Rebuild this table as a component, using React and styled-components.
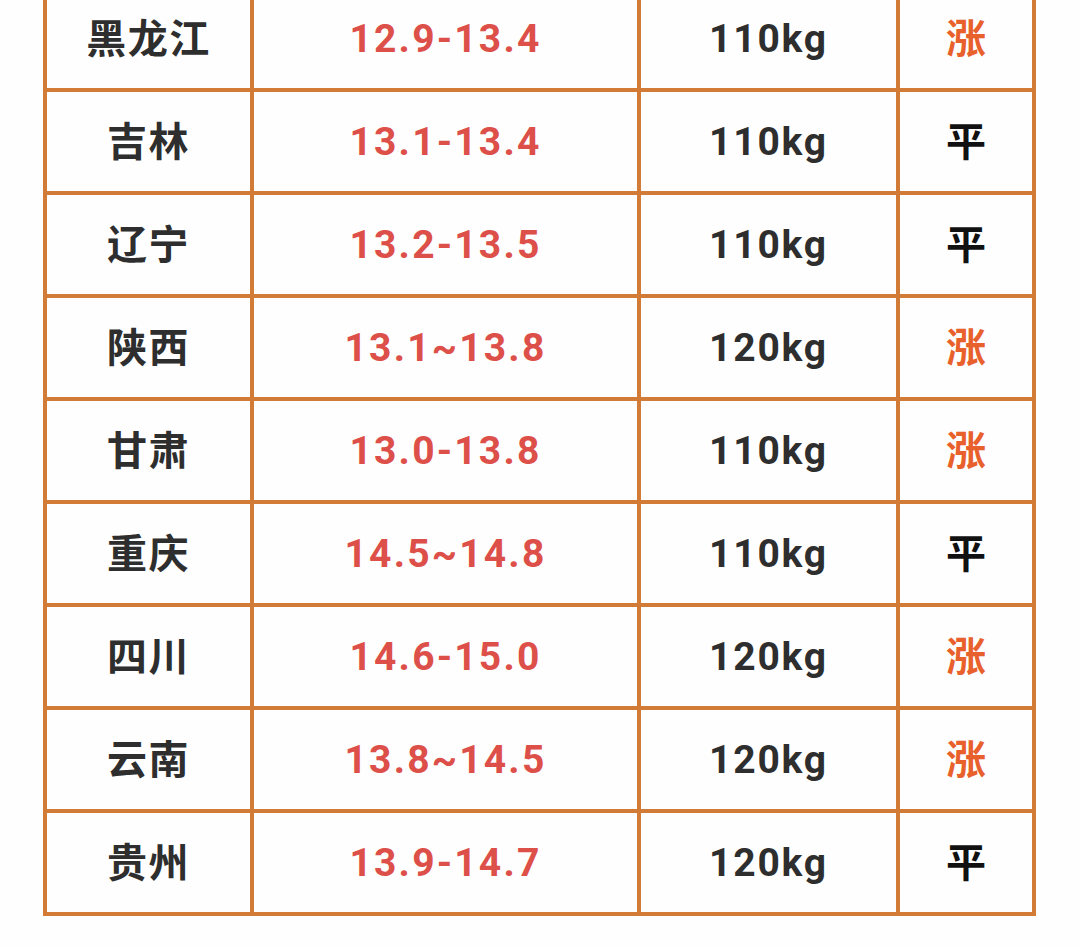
import React from "react";
import styled, { createGlobalStyle } from "styled-components";

const Global = createGlobalStyle`
  html, body { margin: 0; padding: 0; background: #fefefe; }
  body { font-family: "Noto Sans CJK SC", "Noto Sans", sans-serif; }
`;

const Page = styled.div`
  width: 1080px;
  height: 946px;
  overflow: hidden;
  background: #fefefe;
`;

const Table = styled.div`
  display: grid;
  grid-template-columns: 203px 383px 255px 132px;
  grid-auto-rows: 99px;
  gap: 4px;
  padding: 4px;
  background: #d27b36;
  width: max-content;
  margin-left: 43px;
  margin-top: -15px;
`;

const Cell = styled.div`
  background: #fefefe;
  display: flex;
  align-items: center;
  justify-content: center;
  font-weight: 700;
  white-space: nowrap;
`;

const Region = styled(Cell)`
  font-family: "Noto Sans CJK SC", sans-serif;
  font-size: 40px;
  color: #2e2e2e;
  letter-spacing: 1.5px;
  padding-bottom: 5px;
`;

const Price = styled(Cell)`
  font-family: Roboto, "Liberation Sans", sans-serif;
  font-size: 39px;
  color: #dd4f49;
  letter-spacing: 2.2px;
  padding-top: 1px;
`;

const Weight = styled(Cell)`
  font-family: Roboto, "Liberation Sans", sans-serif;
  font-size: 39px;
  color: #2e2e2e;
  letter-spacing: 1.8px;
  padding-top: 1px;
`;

const Trend = styled(Cell)`
  font-family: "Noto Sans CJK SC", sans-serif;
  font-size: 40px;
  padding-bottom: 5px;
  color: ${(p) => (p.$up ? "#e8612c" : "#111111")};
`;

const rows = [
  ["黑龙江", "12.9-13.4", "110kg", true],
  ["吉林", "13.1-13.4", "110kg", false],
  ["辽宁", "13.2-13.5", "110kg", false],
  ["陕西", "13.1~13.8", "120kg", true],
  ["甘肃", "13.0-13.8", "110kg", true],
  ["重庆", "14.5~14.8", "110kg", false],
  ["四川", "14.6-15.0", "120kg", true],
  ["云南", "13.8~14.5", "120kg", true],
  ["贵州", "13.9-14.7", "120kg", false],
];

export default function App() {
  return (
    <Page>
      <Global />
      <Table>
        {rows.map(([r, p, w, up]) => (
          <React.Fragment key={r}>
            <Region>{r}</Region>
            <Price>{p}</Price>
            <Weight>{w}</Weight>
            <Trend $up={up}>{up ? "涨" : "平"}</Trend>
          </React.Fragment>
        ))}
      </Table>
    </Page>
  );
}
